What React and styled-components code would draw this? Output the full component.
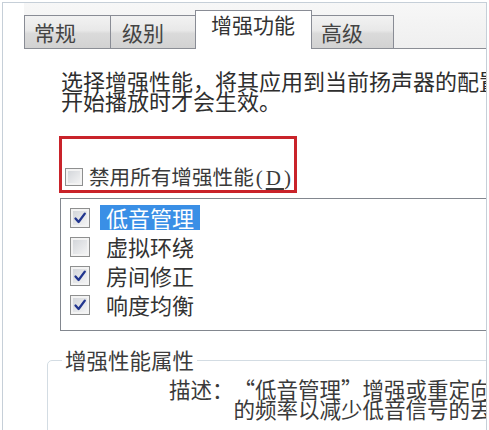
import React from "react";
import styled, { createGlobalStyle } from "styled-components";

const GlobalStyle = createGlobalStyle`
  html, body {
    margin: 0;
    padding: 0;
    background: #fff;
  }
  body {
    font-family: "Noto Sans CJK SC", "Noto Sans", sans-serif;
    color: #333;
  }
`;

const Frame = styled.div`
  box-sizing: border-box;
  width: 485px;
  height: 428px;
  margin: 2px 0 0 2px;
  border: 1px solid #c6cfd8;
  border-bottom: none;
  overflow: hidden;
  background: #fff;
`;

const TabStrip = styled.div`
  display: flex;
  align-items: flex-end;
  height: 45px;
  margin-left: 21px;
  border-bottom: 1px solid #8b8e95;
  background: linear-gradient(#f7f7f7, #efefef);
`;

const Tab = styled.div`
  box-sizing: border-box;
  position: relative;
  z-index: ${(p) => (p.$active ? 1 : 0)};
  width: ${(p) => p.$w}px;
  height: ${(p) => (p.$active ? 39 : 33)}px;
  margin-left: ${(p) => (p.$first ? 0 : -1)}px;
  margin-bottom: ${(p) => (p.$active ? -1 : 0)}px;
  padding-left: ${(p) => p.$pad}px;
  border: 1px solid #898c95;
  border-bottom: none;
  background: ${(p) =>
    p.$active
      ? "#fff"
      : "linear-gradient(#f2f2f2, #e8e8e8 45%, #dadada 55%, #d2d2d2)"};
  font-size: 21px;
  line-height: ${(p) => (p.$active ? 27 : 32)}px;
  color: ${(p) => (p.$active ? "#333" : "#444")};
  white-space: nowrap;
`;

const Intro = styled.p`
  margin: 21px 0 0 58px;
  font-size: 22px;
  line-height: 20px;
  white-space: nowrap;
  color: #2e2e2e;
`;

const Highlight = styled.div`
  box-sizing: border-box;
  display: flex;
  align-items: flex-end;
  width: 238px;
  height: 57px;
  margin: 26px 0 0 56px;
  padding: 0 0 2px 3px;
  border: 3px solid #c9232a;
`;

const CheckRow = styled.label`
  display: flex;
  align-items: center;
  height: 22px;
  gap: 6px;
  font-size: 20.6px;
  line-height: 22px;
  color: #3a3a3a;
  white-space: nowrap;
`;

const Mnemonic = styled.span`
  font-family: "Liberation Serif", serif;
  font-size: 21px;
  letter-spacing: 3px;
  margin-left: 2px;

  u {
    text-decoration-thickness: 2px;
    text-underline-offset: 3px;
  }
`;

const Box = styled.span`
  box-sizing: border-box;
  flex: none;
  display: flex;
  align-items: center;
  justify-content: center;
  width: ${(p) => p.$size}px;
  height: ${(p) => p.$size}px;
  border: 1px solid #8e8f8f;
  background: linear-gradient(135deg, #cfd2d7, #f7f7f7);
  box-shadow: inset 0 0 0 2px #f3f3f3;
`;

const List = styled.div`
  box-sizing: border-box;
  width: 440px;
  height: 133px;
  margin: 5px 0 0 57px;
  padding: 4px 0 0 9px;
  border: 1px solid #82878f;
  background: #fff;
`;

const Item = styled.div`
  display: flex;
  align-items: center;
  height: 29px;
`;

const ItemLabel = styled.span`
  margin-left: 10px;
  padding: 0 6px;
  font-size: 22px;
  line-height: 25px;
  white-space: nowrap;
  color: ${(p) => (p.$selected ? "#fff" : "#333")};
  background: ${(p) => (p.$selected ? "#3a8fe6" : "transparent")};
`;

const Group = styled.fieldset`
  box-sizing: border-box;
  width: 520px;
  height: 120px;
  margin: 18px 0 0 44px;
  padding: 0 0 0 14px;
  border: 1px solid #d3dce3;
  border-radius: 5px;
`;

const GroupTitle = styled.legend`
  padding: 0 3px;
  font-size: 21.5px;
  line-height: 22px;
  color: #3c3c3c;
`;

const Desc = styled.div`
  display: grid;
  grid-template-columns: auto 1fr;
  margin: 8px 0 0 107px;
  font-size: 21.5px;
  line-height: 20px;
  color: #3a3a3a;
  white-space: nowrap;
`;

const DescLines = styled.div`
  display: flex;
  flex-direction: column;
`;

const Check = ({ checked, size }) => (
  <Box $size={size}>
    {checked ? (
      <svg width={size - 6} height={size - 6} viewBox="0 0 14 14">
        <path
          d="M2.5 7.5 L5.6 11 L11.8 2.6"
          fill="none"
          stroke="#22368f"
          strokeWidth="2.3"
          strokeLinecap="round"
          strokeLinejoin="round"
        />
      </svg>
    ) : null}
  </Box>
);

const tabs = [
  { name: "常规", w: 87, pad: 9 },
  { name: "级别", w: 86, pad: 11 },
  { name: "增强功能", w: 117, pad: 15, active: true },
  { name: "高级", w: 83, pad: 9 },
];

const effects = [
  { name: "低音管理", checked: true, selected: true },
  { name: "虚拟环绕", checked: false },
  { name: "房间修正", checked: true },
  { name: "响度均衡", checked: true },
];

const App = () => {
  return (
    <>
      <GlobalStyle />
      <Frame>
        <TabStrip>
          {tabs.map((t, i) => (
            <Tab key={t.name} $w={t.w} $pad={t.pad} $active={t.active} $first={i === 0}>
              {t.name}
            </Tab>
          ))}
        </TabStrip>

        <Intro>
          选择增强性能，将其应用到当前扬声器的配置。更改将在下次
          <br />
          开始播放时才会生效。
        </Intro>

        <Highlight>
          <CheckRow>
            <Check size={18} checked={false} />
            <span>
              禁用所有增强性能
              <Mnemonic>
                (<u>D</u>)
              </Mnemonic>
            </span>
          </CheckRow>
        </Highlight>

        <List>
          {effects.map((e) => (
            <Item key={e.name}>
              <Check size={20} checked={e.checked} />
              <ItemLabel $selected={e.selected}>{e.name}</ItemLabel>
            </Item>
          ))}
        </List>

        <Group>
          <GroupTitle>增强性能属性</GroupTitle>
          <Desc>
            <span>描述：</span>
            <DescLines>
              <span>“低音管理”增强或重定向低于指定频率</span>
              <span>的频率以减少低音信号的丢失。</span>
            </DescLines>
          </Desc>
        </Group>
      </Frame>
    </>
  );
};

export default App;
